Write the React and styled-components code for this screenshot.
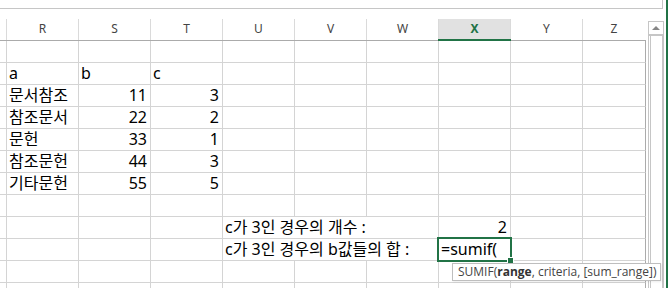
import React from 'react'
import styled, { createGlobalStyle } from 'styled-components'

const GlobalStyle = createGlobalStyle`
  html, body { margin: 0; padding: 0; background: #fff; }
  body { font-family: "Noto Sans", "Noto Sans CJK KR", sans-serif; }
`

const COLS = '7px repeat(8, 72px) 63px'
const LETTERS = ['R', 'S', 'T', 'U', 'V', 'W', 'X', 'Y', 'Z']
const ACTIVE_COL = 'X'

const Window = styled.div`
  width: 668px;
  height: 288px;
  box-sizing: border-box;
  border-right: 2px solid #217346;
  overflow: hidden;
  background: #fff;
`

const FormulaBarEdge = styled.div`
  width: 663px;
  height: 9px;
  box-sizing: border-box;
  border-bottom: 1px solid #c6c6c6;
  border-right: 1px solid #c6c6c6;
`

const Workspace = styled.div`
  display: flex;
  align-items: flex-start;
  margin-top: 10px;
`

const Sheet = styled.div`
  width: 646px;
  flex-shrink: 0;
`

const HeaderRow = styled.div`
  display: grid;
  grid-template-columns: ${COLS};
  height: 22px;
  box-sizing: border-box;
  border-bottom: 1px solid #ababab;
`

const ColumnHeader = styled.div`
  position: relative;
  box-sizing: border-box;
  border-right: 1px solid ${p => (p.$last ? 'transparent' : '#dadada')};
  background: ${p => (p.$active ? '#e1e1e1' : '#fff')};
  color: ${p => (p.$active ? '#217346' : '#444')};
  font-family: "Noto Sans", sans-serif;
  font-size: 12px;
  font-weight: ${p => (p.$active ? 700 : 400)};
  display: flex;
  align-items: center;
  justify-content: center;
  padding-bottom: 3px;

  ${p => p.$active && `
    &::after {
      content: '';
      position: absolute;
      left: -1px;
      right: -1px;
      bottom: -1px;
      height: 2px;
      background: #217346;
    }
  `}
`

const Grid = styled.div`
  display: grid;
  grid-template-columns: ${COLS};
  grid-auto-rows: 22px;
`

const Cell = styled.div`
  box-sizing: border-box;
  grid-column: span ${p => p.$span || 1};
  border-right: 1px solid ${p => (p.$edge ? '#ababab' : '#d4d4d4')};
  border-bottom: 1px solid #d4d4d4;
  padding: 0 3px 0 2px;
  font-family: "Noto Sans", "Noto Sans CJK KR", sans-serif;
  font-size: 16px;
  line-height: 21px;
  color: #000;
  white-space: nowrap;
  text-align: ${p => (p.$num ? 'right' : 'left')};
`

const ActiveCell = styled(Cell)`
  position: relative;
  z-index: 2;

  &::after {
    content: '';
    position: absolute;
    inset: -2px;
    border: 2px solid #217346;
    pointer-events: none;
  }
`

const FillHandle = styled.span`
  position: absolute;
  right: -4px;
  bottom: -4px;
  width: 5px;
  height: 5px;
  background: #217346;
  border: 1px solid #fff;
  z-index: 3;
`

const Tooltip = styled.div`
  position: absolute;
  top: 24px;
  left: 13px;
  height: 18px;
  box-sizing: border-box;
  padding: 0 4px 0 5px;
  border: 1px solid #bebebe;
  background: #fff;
  box-shadow: 1px 1px 2px rgba(0, 0, 0, 0.08);
  font-family: "Open Sans", sans-serif;
  font-size: 12px;
  line-height: 16px;
  color: #444;
  z-index: 4;

  b { font-weight: 700; color: #333; }
`

const Scrollbar = styled.div`
  width: 16px;
  height: 280px;
  margin: 2px 0 0 2px;
  box-sizing: border-box;
  border: 1px solid #c6c6c6;
  border-bottom: none;
  display: flex;
  flex-direction: column;
  flex-shrink: 0;
`

const ScrollButton = styled.div`
  height: 12px;
  border-bottom: 2px solid #c6c6c6;
  display: flex;
  align-items: center;
  justify-content: center;
`

const UpArrow = styled.span`
  width: 0;
  height: 0;
  border-left: 4px solid transparent;
  border-right: 4px solid transparent;
  border-bottom: 4px solid #868686;
`

const Thumb = styled.div`
  flex: 1;
  margin-left: 1px;
  border-left: 1px solid #c6c6c6;
  border-right: 1px solid #c6c6c6;
`

const rows = [
  {},
  { R: 'a', S: 'b', T: 'c' },
  { R: '문서참조', S: 11, T: 3 },
  { R: '참조문서', S: 22, T: 2 },
  { R: '문헌', S: 33, T: 1 },
  { R: '참조문헌', S: 44, T: 3 },
  { R: '기타문헌', S: 55, T: 5 },
  {},
  { U: { text: 'c가 3인 경우의 개수 :', span: 3 }, X: 2 },
  { U: { text: 'c가 3인 경우의 b값들의 합 :', span: 3 }, X: { text: '=sumif(', active: true } },
  {},
  {},
]

function renderRow(row, r) {
  const cells = [<Cell key={`${r}-stub`} />]
  let skip = 0
  LETTERS.forEach((col, i) => {
    if (skip > 0) { skip--; return }
    const raw = row[col]
    const value = raw && typeof raw === 'object' ? raw : { text: raw }
    const span = value.span || 1
    skip = span - 1
    const edge = i + span - 1 === LETTERS.length - 1
    const num = typeof value.text === 'number'
    if (value.active) {
      cells.push(
        <ActiveCell key={`${r}-${col}`}>
          {value.text}
          <FillHandle />
          <Tooltip>
            SUMIF(<b>range</b>, criteria, [sum_range])
          </Tooltip>
        </ActiveCell>
      )
      return
    }
    cells.push(
      <Cell key={`${r}-${col}`} $span={span} $edge={edge} $num={num}>
        {value.text}
      </Cell>
    )
  })
  return cells
}

export default function App() {
  return (
    <>
      <GlobalStyle />
      <Window>
        <FormulaBarEdge />
        <Workspace>
          <Sheet>
            <HeaderRow>
              <ColumnHeader />
              {LETTERS.map((l, i) => (
                <ColumnHeader key={l} $active={l === ACTIVE_COL} $last={i === LETTERS.length - 1}>
                  {l}
                </ColumnHeader>
              ))}
            </HeaderRow>
            <Grid>{rows.map(renderRow)}</Grid>
          </Sheet>
          <Scrollbar>
            <ScrollButton><UpArrow /></ScrollButton>
            <Thumb />
          </Scrollbar>
        </Workspace>
      </Window>
    </>
  )
}
